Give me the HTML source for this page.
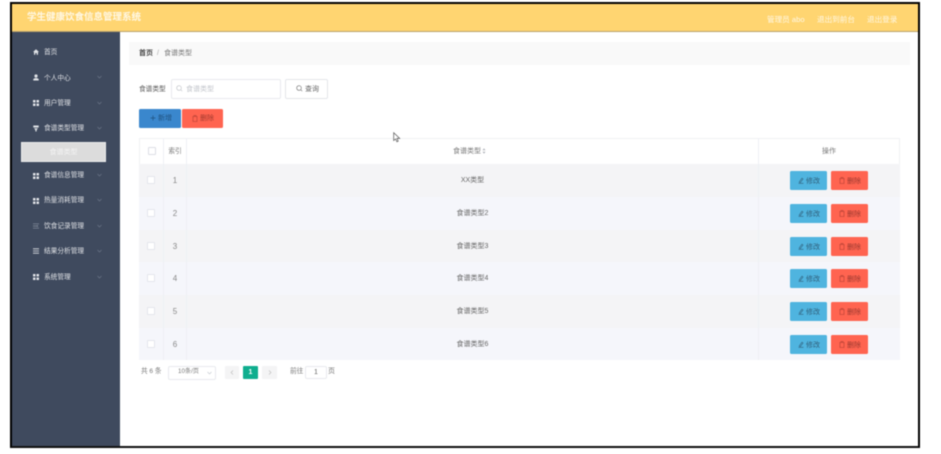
<!DOCTYPE html>
<html lang="zh-CN">
<head>
<meta charset="utf-8">
<title>学生健康饮食信息管理系统</title>
<style>
html,body{margin:0;padding:0;background:#fff;width:941px;height:454px;overflow:hidden}
body{font-family:"Liberation Sans","Noto Sans CJK SC",sans-serif;font-size:7px;color:#666}
#w{position:relative;width:941px;height:454px;overflow:hidden}
#c{position:absolute;left:0;top:0;width:941px;height:454px;filter:blur(.5px)}
#w div,#w svg.a{position:absolute;box-sizing:border-box}
.t{white-space:nowrap;line-height:12px;height:12px;margin-top:1px}
.r{margin-top:2px}
.c{text-align:center}
.frame{left:10px;top:2px;width:910px;height:446px;border:2px solid #000;border-bottom-color:#111}
.hd{left:12px;top:4px;width:906px;height:28px;background:#ffd571;border-bottom:1px solid #b9a26c}
.sb{left:12px;top:32px;width:108px;height:414px;background:#3f4a5e}
.m{color:#dfe1e5;font-size:6.7px}
.btn{border-radius:1.5px}
.bt{margin-top:0;width:37px;height:19px;line-height:21px;padding-left:16px}
.blue{background:#4fb4df;color:#31607c}
.red{background:#ff6450;color:#9a3a30}
.cb{width:8px;height:8px;background:#fff;border:1px solid #e4e6ec;border-radius:1px}
.ln{background:#eef0f5}
.n{font-size:8px}
</style>
</head>
<body>
<div id="w"><div id="c">
  <div class="hd"></div>
  <div class="t" style="left:27px;top:11px;font-size:9.5px;font-weight:bold;color:#fff8e6">学生健康饮食信息管理系统</div>
  <div class="t r" style="left:767px;top:12px;color:#fff8e6;font-size:7.6px">管理员 abo</div>
  <div class="t r" style="left:817px;top:12px;color:#fff8e6;font-size:7.6px">退出到前台</div>
  <div class="t r" style="left:867px;top:12px;color:#fff8e6;font-size:7.6px">退出登录</div>

  <div class="sb"></div>
  <!-- menu -->
  <svg class="a" style="left:33px;top:49px" width="6" height="6" viewBox="0 0 6 6"><path d="M3 .3 6 3H5v2.700H3.700V4H2.300v1.700H1V3H0z" fill="#dfe2e6"/></svg>
  <div class="t m" style="left:44px;top:46px">首页</div>

  <svg class="a" style="left:33px;top:74px" width="6" height="7" viewBox="0 0 6 7"><circle cx="3" cy="2" r="1.600" fill="#dfe2e6"/><path d="M.3 6.500V5Q3 3 5.700 5v1.500z" fill="#dfe2e6"/></svg>
  <div class="t m" style="left:44px;top:72px">个人中心</div>
  <svg class="a" style="left:97px;top:75px" width="5" height="4" viewBox="0 0 5 4"><path d="M.5 1 2.500 3 4.500 1" fill="none" stroke="#6b7588" stroke-width=".7"/></svg>

  <svg class="a" style="left:33px;top:100px" width="6" height="6" viewBox="0 0 6 6"><path d="M0 0h2.500v2.500H0zM3.500 0H6v2.500H3.500zM0 3.500h2.500V6H0zM3.500 3.500H6V6H3.500z" fill="#dfe2e6"/></svg>
  <div class="t m" style="left:44px;top:97px">用户管理</div>
  <svg class="a" style="left:97px;top:101px" width="5" height="4" viewBox="0 0 5 4"><path d="M.5 1 2.500 3 4.500 1" fill="none" stroke="#6b7588" stroke-width=".7"/></svg>

  <svg class="a" style="left:33px;top:125px" width="6" height="7" viewBox="0 0 6 7"><path d="M.3.500h5.400v2H.3zM1 3.300h4L3.600 5v1.500H2.400V5z" fill="#dfe2e6"/></svg>
  <div class="t m" style="left:44px;top:122px">食谱类型管理</div>
  <svg class="a" style="left:97px;top:126px" width="5" height="4" viewBox="0 0 5 4"><path d="M.5 1 2.500 3 4.500 1" fill="none" stroke="#6b7588" stroke-width=".7"/></svg>

  <div style="left:21px;top:142px;width:85px;height:20px;background:#dcdcdc;border:1px solid #ececec"></div>
  <div class="t c" style="left:21px;top:146px;width:85px;color:#f4f4f4">食谱类型</div>

  <svg class="a" style="left:33px;top:173px" width="6" height="6" viewBox="0 0 6 6"><path d="M0 0h2.500v2.500H0zM3.500 0H6v2.500H3.500zM0 3.500h2.500V6H0zM3.500 3.500H6V6H3.500z" fill="#dfe2e6"/></svg>
  <div class="t m" style="left:44px;top:169px">食谱信息管理</div>
  <svg class="a" style="left:97px;top:173px" width="5" height="4" viewBox="0 0 5 4"><path d="M.5 1 2.500 3 4.500 1" fill="none" stroke="#6b7588" stroke-width=".7"/></svg>

  <svg class="a" style="left:33px;top:198px" width="6" height="6" viewBox="0 0 6 6"><path d="M0 0h2.500v2.500H0zM3.500 0H6v2.500H3.500zM0 3.500h2.500V6H0zM3.500 3.500H6V6H3.500z" fill="#dfe2e6"/></svg>
  <div class="t m" style="left:44px;top:194px">热量消耗管理</div>
  <svg class="a" style="left:97px;top:198px" width="5" height="4" viewBox="0 0 5 4"><path d="M.5 1 2.500 3 4.500 1" fill="none" stroke="#6b7588" stroke-width=".7"/></svg>

  <svg class="a" style="left:33px;top:223px" width="6" height="6" viewBox="0 0 6 6"><path d="M0 .8h6M0 3h4M0 5.200h6M4.500 2v2" fill="none" stroke="#8c95a3" stroke-width=".7"/></svg>
  <div class="t m" style="left:44px;top:220px">饮食记录管理</div>
  <svg class="a" style="left:97px;top:224px" width="5" height="4" viewBox="0 0 5 4"><path d="M.5 1 2.500 3 4.500 1" fill="none" stroke="#6b7588" stroke-width=".7"/></svg>

  <svg class="a" style="left:33px;top:248px" width="6" height="6" viewBox="0 0 6 6"><path d="M0 .8h6M0 3h6M0 5.200h6" fill="none" stroke="#dfe2e6" stroke-width=".8"/></svg>
  <div class="t m" style="left:44px;top:245px">结果分析管理</div>
  <svg class="a" style="left:97px;top:249px" width="5" height="4" viewBox="0 0 5 4"><path d="M.5 1 2.500 3 4.500 1" fill="none" stroke="#6b7588" stroke-width=".7"/></svg>

  <svg class="a" style="left:33px;top:274px" width="6" height="6" viewBox="0 0 6 6"><path d="M0 0h2.500v2.500H0zM3.500 0H6v2.500H3.500zM0 3.500h2.500V6H0zM3.500 3.500H6V6H3.500z" fill="#dfe2e6"/></svg>
  <div class="t m" style="left:44px;top:271px">系统管理</div>
  <svg class="a" style="left:97px;top:275px" width="5" height="4" viewBox="0 0 5 4"><path d="M.5 1 2.500 3 4.500 1" fill="none" stroke="#6b7588" stroke-width=".7"/></svg>

  <!-- breadcrumb -->
  <div style="left:129px;top:42px;width:781px;height:23px;background:#f9f9f9"></div>
  <div class="t" style="left:139px;top:47px;color:#444;font-weight:bold">首页</div>
  <div class="t" style="left:157px;top:47px;color:#aaa">/</div>
  <div class="t" style="left:164px;top:47px;color:#777">食谱类型</div>

  <!-- search -->
  <div class="t" style="left:139px;top:83px;color:#555;font-size:6.7px">食谱类型</div>
  <div style="left:171px;top:79px;width:110px;height:20px;background:#fff;border:1px solid #e8eaee;border-radius:2px"></div>
  <svg class="a" style="left:176px;top:85px" width="7" height="7" viewBox="0 0 7 7"><circle cx="3" cy="3" r="2.300" fill="none" stroke="#b9bcc2" stroke-width=".6"/><path d="M4.700 4.700 6.200 6.200" stroke="#b9bcc2" stroke-width=".6"/></svg>
  <div class="t" style="left:186px;top:83px;color:#c2c5cb">食谱类型</div>
  <div style="left:285px;top:79px;width:43px;height:20px;background:#fff;border:1px solid #e4e6ea;border-radius:2px"></div>
  <svg class="a" style="left:296px;top:85px" width="7" height="7" viewBox="0 0 7 7"><circle cx="3" cy="3" r="2.300" fill="none" stroke="#666" stroke-width=".6"/><path d="M4.700 4.700 6.200 6.200" stroke="#666" stroke-width=".6"/></svg>
  <div class="t" style="left:305px;top:83px;color:#666">查询</div>

  <div class="btn" style="left:139px;top:109px;width:42px;height:19px;background:#3a87cd"></div>
  <svg class="a" style="left:150px;top:115px" width="6" height="6" viewBox="0 0 6 6"><path d="M3 .5v5M.5 3h5" stroke="#20527f" stroke-width=".7"/></svg>
  <div class="t" style="left:158px;top:112px;color:#20527f">新增</div>
  <div class="btn" style="left:182px;top:109px;width:41px;height:19px;background:#ff6450"></div>
  <svg class="a" style="left:192px;top:115px" width="6" height="7" viewBox="0 0 6 7"><path d="M.5 1.500h5M2 1.500V.6h2v.9M1 1.500v5h4v-5" fill="none" stroke="#b23f33" stroke-width=".6"/></svg>
  <div class="t" style="left:200px;top:112px;color:#a33a2f">删除</div>

  <!-- table -->
  <div style="left:139px;top:138px;width:761px;height:26px;background:#fff;border:1px solid #f0f1f4;border-bottom:0"></div>
  <div style="left:139px;top:164px;width:761px;height:33px;background:#f4f4f6"></div>
  <div style="left:139px;top:197px;width:761px;height:33px;background:#f5f6fb"></div>
  <div style="left:139px;top:230px;width:761px;height:32px;background:#f4f4f6"></div>
  <div style="left:139px;top:262px;width:761px;height:33px;background:#f5f6fb"></div>
  <div style="left:139px;top:295px;width:761px;height:33px;background:#f4f4f6"></div>
  <div style="left:139px;top:328px;width:761px;height:32px;background:#f5f6fb"></div>
  <div class="ln" style="left:163px;top:138px;width:1px;height:222px"></div>
  <div class="ln" style="left:186px;top:138px;width:1px;height:222px"></div>
  <div class="ln" style="left:758px;top:138px;width:1px;height:222px"></div>

  <div class="cb" style="left:148px;top:147px;border-color:#dcdfe5"></div>
  <div class="t c r" style="left:163px;top:144px;width:24px;color:#777;font-size:6.7px">索引</div>
  <div class="t r" style="left:453px;top:144px;color:#777">食谱类型</div>
  <svg class="a" style="left:482px;top:148px" width="4" height="6" viewBox="0 0 4 6"><path d="M2 .3 3.500 2.300H.5zM2 5.700.5 3.700h3z" fill="#b0b3b9"/></svg>
  <div class="t c r" style="left:758px;top:144px;width:142px;color:#777">操作</div>

  <!-- rows -->
  <div class="cb" style="left:147px;top:176px"></div><div class="t c r n" style="left:163px;top:173px;width:24px;color:#888">1</div><div class="t c r" style="left:187px;top:173px;width:571px;color:#666">XX类型</div>
  <div class="cb" style="left:147px;top:209px"></div><div class="t c r n" style="left:163px;top:206px;width:24px;color:#888">2</div><div class="t c r" style="left:187px;top:206px;width:571px;color:#666">食谱类型2</div>
  <div class="cb" style="left:147px;top:242px"></div><div class="t c r n" style="left:163px;top:239px;width:24px;color:#888">3</div><div class="t c r" style="left:187px;top:239px;width:571px;color:#666">食谱类型3</div>
  <div class="cb" style="left:147px;top:274px"></div><div class="t c r n" style="left:163px;top:271px;width:24px;color:#888">4</div><div class="t c r" style="left:187px;top:271px;width:571px;color:#666">食谱类型4</div>
  <div class="cb" style="left:147px;top:307px"></div><div class="t c r n" style="left:163px;top:304px;width:24px;color:#888">5</div><div class="t c r" style="left:187px;top:304px;width:571px;color:#666">食谱类型5</div>
  <div class="cb" style="left:147px;top:340px"></div><div class="t c r n" style="left:163px;top:337px;width:24px;color:#888">6</div><div class="t c r" style="left:187px;top:337px;width:571px;color:#666">食谱类型6</div>

  <!-- row buttons -->
  <div class="btn blue t bt" style="left:790px;top:171px">修改</div><div class="btn red t bt" style="left:831px;top:171px">删除</div>
  <div class="btn blue t bt" style="left:790px;top:204px">修改</div><div class="btn red t bt" style="left:831px;top:204px">删除</div>
  <div class="btn blue t bt" style="left:790px;top:237px">修改</div><div class="btn red t bt" style="left:831px;top:237px">删除</div>
  <div class="btn blue t bt" style="left:790px;top:269px">修改</div><div class="btn red t bt" style="left:831px;top:269px">删除</div>
  <div class="btn blue t bt" style="left:790px;top:302px">修改</div><div class="btn red t bt" style="left:831px;top:302px">删除</div>
  <div class="btn blue t bt" style="left:790px;top:335px">修改</div><div class="btn red t bt" style="left:831px;top:335px">删除</div>

  <!-- row button icons -->
  <svg class="a" style="left:798px;top:177px" width="6" height="7" viewBox="0 0 6 7"><path d="M.5 6.300h5M1.200 5 4 1.200l1 .8L2.300 5.500z" fill="none" stroke="#31607c" stroke-width=".6"/></svg><svg class="a" style="left:839px;top:177px" width="6" height="7" viewBox="0 0 6 7"><path d="M.5 1.500h5M2 1.500V.6h2v.9M1 1.500v5h4v-5" fill="none" stroke="#b23f33" stroke-width=".6"/></svg>
  <svg class="a" style="left:798px;top:210px" width="6" height="7" viewBox="0 0 6 7"><path d="M.5 6.300h5M1.200 5 4 1.200l1 .8L2.300 5.500z" fill="none" stroke="#31607c" stroke-width=".6"/></svg><svg class="a" style="left:839px;top:210px" width="6" height="7" viewBox="0 0 6 7"><path d="M.5 1.500h5M2 1.500V.6h2v.9M1 1.500v5h4v-5" fill="none" stroke="#b23f33" stroke-width=".6"/></svg>
  <svg class="a" style="left:798px;top:243px" width="6" height="7" viewBox="0 0 6 7"><path d="M.5 6.300h5M1.200 5 4 1.200l1 .8L2.300 5.500z" fill="none" stroke="#31607c" stroke-width=".6"/></svg><svg class="a" style="left:839px;top:243px" width="6" height="7" viewBox="0 0 6 7"><path d="M.5 1.500h5M2 1.500V.6h2v.9M1 1.500v5h4v-5" fill="none" stroke="#b23f33" stroke-width=".6"/></svg>
  <svg class="a" style="left:798px;top:275px" width="6" height="7" viewBox="0 0 6 7"><path d="M.5 6.300h5M1.200 5 4 1.200l1 .8L2.300 5.500z" fill="none" stroke="#31607c" stroke-width=".6"/></svg><svg class="a" style="left:839px;top:275px" width="6" height="7" viewBox="0 0 6 7"><path d="M.5 1.500h5M2 1.500V.6h2v.9M1 1.500v5h4v-5" fill="none" stroke="#b23f33" stroke-width=".6"/></svg>
  <svg class="a" style="left:798px;top:308px" width="6" height="7" viewBox="0 0 6 7"><path d="M.5 6.300h5M1.200 5 4 1.200l1 .8L2.300 5.500z" fill="none" stroke="#31607c" stroke-width=".6"/></svg><svg class="a" style="left:839px;top:308px" width="6" height="7" viewBox="0 0 6 7"><path d="M.5 1.500h5M2 1.500V.6h2v.9M1 1.500v5h4v-5" fill="none" stroke="#b23f33" stroke-width=".6"/></svg>
  <svg class="a" style="left:798px;top:341px" width="6" height="7" viewBox="0 0 6 7"><path d="M.5 6.300h5M1.200 5 4 1.200l1 .8L2.300 5.500z" fill="none" stroke="#31607c" stroke-width=".6"/></svg><svg class="a" style="left:839px;top:341px" width="6" height="7" viewBox="0 0 6 7"><path d="M.5 1.500h5M2 1.500V.6h2v.9M1 1.500v5h4v-5" fill="none" stroke="#b23f33" stroke-width=".6"/></svg>

  <!-- pagination -->
  <div class="t r" style="left:141px;top:364px;color:#777;font-size:6.6px">共 6 条</div>
  <div style="left:168px;top:366px;width:48px;height:14px;background:#fff;border:1px solid #e8eaee;border-radius:2px"></div>
  <div class="t r" style="left:178px;top:364px;color:#777;font-size:6.2px">10条/页</div>
  <svg class="a" style="left:207px;top:371px" width="5" height="4" viewBox="0 0 5 4"><path d="M.5 1 2.500 3 4.500 1" fill="none" stroke="#c0c4cc" stroke-width=".6"/></svg>
  <div style="left:225px;top:366px;width:14px;height:13px;background:#f4f4f5;border-radius:1px"></div>
  <svg class="a" style="left:230px;top:370px" width="4" height="5" viewBox="0 0 4 5"><path d="M3 .5 1 2.500 3 4.500" fill="none" stroke="#bbb" stroke-width=".6"/></svg>
  <div class="t c" style="left:243px;top:366px;width:15px;height:13px;line-height:13px;margin-top:0;background:#0fae8e;color:#fff;border-radius:1px;font-weight:bold">1</div>
  <div style="left:262px;top:366px;width:15px;height:13px;background:#f4f4f5;border-radius:1px"></div>
  <svg class="a" style="left:268px;top:370px" width="4" height="5" viewBox="0 0 4 5"><path d="M1 .5 3 2.500 1 4.500" fill="none" stroke="#bbb" stroke-width=".6"/></svg>
  <div class="t r" style="left:290px;top:364px;color:#777;font-size:6.7px">前往</div>
  <div class="t c" style="left:305px;top:366px;width:22px;height:13px;line-height:12px;margin-top:0;background:#fff;border:1px solid #e8eaee;border-radius:2px;color:#666">1</div>
  <div class="t r" style="left:328px;top:364px;color:#777">页</div>

  <!-- cursor -->
  <svg class="a" style="left:393px;top:132px" width="8" height="11" viewBox="0 0 8 11"><path d="M.7.7V8.500L2.600 6.900 3.900 9.800 5.200 9.200 4 6.400H6.700z" fill="#fff" stroke="#555" stroke-width=".7"/></svg>

  <div class="frame"></div>
</div></div>
</body>
</html>
